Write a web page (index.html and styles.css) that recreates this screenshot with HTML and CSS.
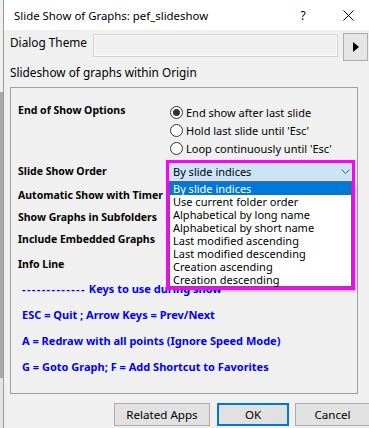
FILE: index.html
```html
<!DOCTYPE html>
<html lang="en">
<head>
    <meta charset="UTF-8">
    <title>Slide Show of Graphs</title>
    <link rel="stylesheet" href="styles.css">
</head>
<body>
    <div class="edge"></div>
    <div class="dialog">
        <div class="titlebar">
            <span class="title">Slide Show of Graphs: pef_slideshow</span>
            <span class="help">?</span>
            <span class="close">
                <svg width="11" height="11" viewBox="0 0 11 11"><path d="M0.5 0.5 L10.5 10.5 M10.5 0.5 L0.5 10.5" stroke="#000" stroke-width="1" fill="none"/></svg>
            </span>
        </div>

        <div class="content">
            <div class="theme-row">
                <span class="theme-label">Dialog Theme</span>
                <div class="theme-input"></div>
                <div class="theme-btn">
                    <svg width="6" height="10" viewBox="0 0 6 10"><path d="M0 0 L6 5 L0 10 Z" fill="#000"/></svg>
                </div>
            </div>

            <div class="desc">Slideshow of graphs within Origin</div>

            <div class="group">
                <div class="row row-end">
                    <div class="label">End of Show Options</div>
                    <div class="radios">
                        <div class="radio"><span class="radio-mark checked"></span>End show after last slide</div>
                        <div class="radio"><span class="radio-mark"></span>Hold last slide until 'Esc'</div>
                        <div class="radio"><span class="radio-mark"></span>Loop continuously until 'Esc'</div>
                    </div>
                </div>

                <div class="row row-order">
                    <div class="label">Slide Show Order</div>
                    <div class="picker">
                        <div class="combo">
                            By slide indices
                            <svg class="chevron" width="9" height="5" viewBox="0 0 9 5"><path d="M0.5 0.5 L4.5 4.5 L8.5 0.5" stroke="#555" stroke-width="1" fill="none"/></svg>
                        </div>
                        <ul class="dropdown">
                            <li class="selected">By slide indices</li>
                            <li>Use current folder order</li>
                            <li>Alphabetical by long name</li>
                            <li>Alphabetical by short name</li>
                            <li>Last modified ascending</li>
                            <li>Last modified descending</li>
                            <li>Creation ascending</li>
                            <li>Creation descending</li>
                        </ul>
                        <div class="mark"></div>
                    </div>
                </div>

                <div class="row opt"><div class="label">Automatic Show with Timer</div></div>
                <div class="row opt"><div class="label">Show Graphs in Subfolders</div></div>
                <div class="row opt"><div class="label">Include Embedded Graphs</div></div>
                <div class="row opt info"><div class="label">Info Line</div></div>

                <div class="note"><span class="dashes">-------------</span> Keys to use during show</div>
                <div class="note">ESC = Quit ; Arrow Keys = Prev/Next</div>
                <div class="note">A = Redraw with all points (Ignore Speed Mode)</div>
                <div class="note">G = Goto Graph; F = Add Shortcut to Favorites</div>
            </div>

            <div class="actions">
                <button class="btn btn-apps">Related Apps</button>
                <button class="btn btn-ok">OK</button>
                <button class="btn btn-cancel">Cancel</button>
            </div>
        </div>
    </div>
</body>
</html>
```

FILE: styles.css
```css
body {
    margin: 0;
    width: 369px;
    height: 428px;
    overflow: hidden;
    display: flex;
    font-family: "Noto Sans", "Open Sans", sans-serif;
    font-size: 11px;
    color: #000;
    background: #f0f0f0;
}

/* strip of the window behind the dialog */
.edge {
    flex: none;
    width: 3px;
    border-right: 1px solid #9a9a9a;
    background: linear-gradient(to bottom, #f0f0f0 0, #f0f0f0 92px, #a8a8a8 92px, #a8a8a8 378px, #e4e4e4 378px);
}

.dialog {
    flex: none;
    width: 366px;
    display: flex;
    flex-direction: column;
    background: #f0f0f0;
}

.titlebar {
    height: 30px;
    background: #fff;
    display: flex;
    align-items: center;
    padding-left: 10px;
}

.title {
    flex: none;
    width: 284px;
    font-size: 11.4px;
}

.help {
    flex: none;
    width: 10px;
    font-size: 12px;
    text-align: center;
}

.close {
    flex: none;
    width: 11px;
    margin-left: 35px;
    display: flex;
    align-items: center;
}

.content {
    padding-left: 6px;
}

.theme-row {
    display: flex;
    margin-top: 3px;
    height: 28px;
}

.theme-label {
    width: 83px;
    line-height: 18px;
    font-size: 11.8px;
}

.theme-input {
    width: 243px;
    height: 21px;
    margin-top: 1px;
    border: 1px solid #d3d3d3;
    background: #f0f0f0;
    box-shadow: inset 0 0 0 1px #f9f9f9;
}

.theme-btn {
    width: 23px;
    height: 26px;
    margin-left: 5px;
    border: 1px solid #adadad;
    background: #e5e5e5;
    display: flex;
    align-items: center;
    justify-content: center;
}

.desc {
    margin-top: 2px;
    line-height: 18px;
    font-size: 11.8px;
}

.group {
    margin-top: 6px;
    width: 339px;
    border: 1px solid #a0a0a0;
    padding: 15px 0 13px 7px;
}

.row {
    display: flex;
}

.label {
    width: 151px;
    flex: none;
    font-weight: bold;
    font-size: 10.5px;
    white-space: nowrap;
}

.row-end .label {
    line-height: 14px;
}

.radio {
    display: flex;
    align-items: center;
    height: 18px;
}

.radio-mark {
    width: 11px;
    height: 11px;
    margin: 0 3px 0 1px;
    border: 1px solid #333;
    border-radius: 50%;
    background: #fff;
    display: flex;
    align-items: center;
    justify-content: center;
}

.radio-mark.checked::after {
    content: "";
    width: 7px;
    height: 7px;
    border-radius: 50%;
    background: #333;
}

.row-order {
    margin-top: 5px;
    height: 22px;
}

.row-order .label {
    line-height: 18px;
}

.picker {
    position: relative;
    width: 183px;
    height: 18px;
    margin-top: 1px;
}

.combo {
    height: 18px;
    line-height: 18px;
    padding-left: 4px;
    background: #cce4f7;
    position: relative;
}

.chevron {
    position: absolute;
    right: 2px;
    top: 6px;
}

.dropdown {
    position: absolute;
    top: 18px;
    left: 0;
    width: 181px;
    margin: 0;
    padding: 0;
    list-style: none;
    background: #fff;
    border: 1px solid #646464;
    box-shadow: 4px 4px 3px rgba(0, 0, 0, 0.3);
    z-index: 2;
}

.dropdown li {
    height: 13px;
    line-height: 13px;
    padding-left: 3px;
}

.dropdown li.selected {
    background: #0078d7;
    color: #fff;
}

.mark {
    position: absolute;
    top: -3px;
    left: -3px;
    width: 183px;
    height: 124px;
    border: 3px solid #ff00ff;
    z-index: 3;
}

.opt {
    height: 22px;
    line-height: 22px;
}

.info {
    height: 24px;
    padding-top: 2px;
    line-height: 24px;
}

.note {
    height: 26px;
    line-height: 26px;
    padding-left: 4px;
    color: #0000ff;
    font-weight: bold;
    white-space: nowrap;
}

.dashes {
    letter-spacing: 1.4px;
}

.actions {
    display: flex;
    margin-top: 9px;
    padding-left: 104px;
    gap: 7px;
}

.btn {
    height: 23px;
    font-family: inherit;
    font-size: 11.6px;
    border: 1px solid #adadad;
    background: #e1e1e1;
    padding: 0;
    color: #000;
}

.btn-apps {
    width: 96px;
}

.btn-ok {
    width: 72px;
    border: 2px solid #0078d7;
}

.btn-cancel {
    width: 75px;
    margin-left: -1px;
}
```
